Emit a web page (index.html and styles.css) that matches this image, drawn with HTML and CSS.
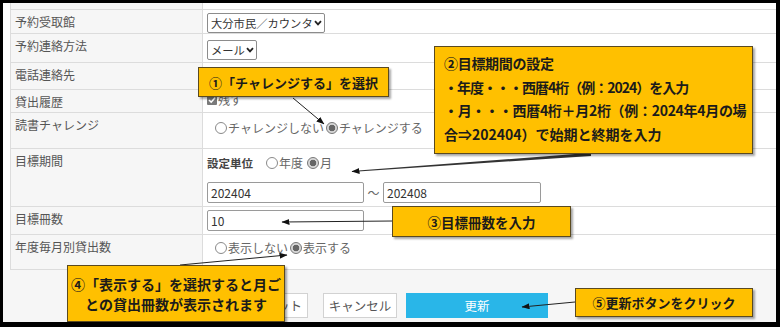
FILE: index.html
```html
<!DOCTYPE html>
<html lang="ja">
<head>
<meta charset="utf-8">
<title>読書チャレンジ設定</title>
<link rel="stylesheet" href="styles.css">
</head>
<body>
<div class="frame">
  <div class="form">
    <div class="row row--stub"><div class="label"></div><div class="value"></div></div>
    <div class="row row--pickup">
      <div class="label">予約受取館</div>
      <div class="value value--pickup">
        <div class="select">大分市民／カウンタ<svg class="chev" width="8" height="6" viewBox="0 0 8 6"><path d="M1 1.2 L4 4.4 L7 1.2" fill="none" stroke="#222" stroke-width="1.8"/></svg></div>
      </div>
    </div>
    <div class="row row--contact">
      <div class="label">予約連絡方法</div>
      <div class="value value--contact">
        <div class="select">メール<svg class="chev" width="8" height="6" viewBox="0 0 8 6"><path d="M1 1.2 L4 4.4 L7 1.2" fill="none" stroke="#222" stroke-width="1.8"/></svg></div>
      </div>
    </div>
    <div class="row row--phone">
      <div class="label">電話連絡先</div>
      <div class="value"></div>
    </div>
    <div class="row row--history">
      <div class="label">貸出履歴</div>
      <div class="value value--history">
        <span class="check"><svg width="10" height="10" viewBox="0 0 10 10"><path d="M2 5 L4.2 7.2 L8.2 2.6" fill="none" stroke="#fff" stroke-width="1.6"/></svg></span><span>残す</span>
      </div>
    </div>
    <div class="row row--challenge">
      <div class="label">読書チャレンジ</div>
      <div class="value value--radios">
        <span class="radio"></span><span>チャレンジしない</span>
        <span class="radio radio--on radio--gap"></span><span>チャレンジする</span>
      </div>
    </div>
    <div class="row row--period">
      <div class="label">目標期間</div>
      <div class="value value--period">
        <div class="unit-line">
          <span class="unit-title">設定単位</span>
          <span class="radio"></span><span>年度</span>
          <span class="radio radio--on radio--gap-wide"></span><span>月</span>
        </div>
        <div class="range-line">
          <div class="input">202404</div>
          <span class="tilde">～</span>
          <div class="input input--end">202408</div>
        </div>
      </div>
    </div>
    <div class="row row--target">
      <div class="label">目標冊数</div>
      <div class="value value--target">
        <div class="input">10</div>
      </div>
    </div>
    <div class="row row--monthly">
      <div class="label">年度毎月別貸出数</div>
      <div class="value value--monthly">
        <span class="radio"></span><span>表示しない</span>
        <span class="radio radio--on radio--gap"></span><span>表示する</span>
      </div>
    </div>
  </div>
  <div class="footer">
    <div class="btn btn--reset">リセット</div>
    <div class="btn btn--cancel">キャンセル</div>
    <div class="btn btn--primary">更新</div>
  </div>

  <svg class="arrows" width="773" height="319" viewBox="0 0 773 319">
    <defs>
      <marker id="ah" markerWidth="8" markerHeight="6" refX="7.5" refY="3" orient="auto" markerUnits="userSpaceOnUse">
        <path d="M0 0 L8 3 L0 6 Z" fill="#111"/>
      </marker>
    </defs>
    <line x1="290" y1="95" x2="321" y2="121" stroke="#222" stroke-width="1" marker-end="url(#ah)"/>
    <path d="M588 149.8 L588 153 L355 168.4 L355 167.6 Z" fill="#333"/>
    <line x1="356" y1="168" x2="349" y2="168.5" stroke="#222" stroke-width="1" marker-end="url(#ah)"/>
    <line x1="389" y1="218" x2="279" y2="219" stroke="#222" stroke-width="1" marker-end="url(#ah)"/>
    <line x1="177" y1="262" x2="284" y2="252" stroke="#222" stroke-width="1" marker-end="url(#ah)"/>
    <line x1="572" y1="299" x2="519" y2="304" stroke="#222" stroke-width="1" marker-end="url(#ah)"/>
  </svg>

  <div class="callout callout--one">①「チャレンジする」を選択</div>
  <div class="callout callout--two">
    <div class="line line--tight">②目標期間の設定</div>
    <div class="line line--tighter">・年度・・・西暦4桁（例：2024）を入力</div>
    <div class="line line--tight">・月・・・西暦4桁＋月2桁（例：2024年4月の場</div>
    <div class="line">合⇒202404）で始期と終期を入力</div>
  </div>
  <div class="callout callout--three">③目標冊数を入力</div>
  <div class="callout callout--four">
    <div>④「表示する」を選択すると月ご</div>
    <div>との貸出冊数が表示されます</div>
  </div>
  <div class="callout callout--five">⑤更新ボタンをクリック</div>
</div>
</body>
</html>
```

FILE: styles.css
```css
html, body {
  margin: 0;
  padding: 0;
}
body {
  background: #000;
  width: 780px;
  height: 327px;
  overflow: hidden;
  font-family: "Noto Sans CJK JP", "Noto Sans", sans-serif;
}
.frame {
  position: relative;
  margin: 3px 4px 0 3px;
  height: 319px;
  background: #fff;
  overflow: hidden;
}
.form {
  margin-left: 7px;
}
.row {
  display: grid;
  grid-template-columns: 193px 1fr;
  border-bottom: 1px solid #dcdcdc;
  box-sizing: border-box;
}
.row--stub { height: 7px; }
.row--pickup { height: 24px; }
.row--contact { height: 29px; }
.row--phone { height: 27px; }
.row--history { height: 23px; }
.row--challenge { height: 36px; }
.row--period { height: 58px; }
.row--target { height: 28px; }
.row--monthly { height: 35px; }

.label {
  background: #f6f6f6;
  border-left: 1px solid #dcdcdc;
  border-right: 1px solid #dcdcdc;
  padding: 4px 0 0 4px;
  font-size: 12px;
  line-height: 16px;
  color: #555;
}
.value {
  padding-left: 4px;
  font-size: 12px;
  line-height: 16px;
  color: #666;
}
.value--pickup { padding-top: 3px; }
.value--contact { padding-top: 6px; }
.value--history {
  padding-top: 2px;
  display: flex;
  align-items: center;
  height: 16px;
}
.value--radios {
  padding: 7px 0 0 12px;
  display: flex;
  align-items: center;
  height: 16px;
}
.value--monthly {
  padding: 5px 0 0 12px;
  display: flex;
  align-items: center;
  height: 16px;
}
.value--period { padding-top: 6px; }
.value--target { padding-top: 3px; }

.select {
  display: inline-flex;
  align-items: center;
  box-sizing: border-box;
  height: 20px;
  border: 1px solid #8c8c8c;
  border-radius: 2px;
  padding: 0 2px 0 3px;
  font-size: 11.3px;
  white-space: nowrap;
  color: #333;
  background: #fff;
}
.chev { flex: none; margin-left: 1px; }

.check {
  display: inline-block;
  width: 10px;
  height: 10px;
  background: #7a7a7a;
  border-radius: 1px;
  margin-right: 1px;
}
.check svg { display: block; }

.radio {
  display: inline-block;
  flex: none;
  width: 10px;
  height: 10px;
  border: 1px solid #8a8a8a;
  border-radius: 50%;
  background: #fff;
  margin-right: 1px;
}
.radio--on {
  background: radial-gradient(circle, #666 0 3px, #d8d8d8 3.6px);
  border-color: #777;
}
.radio--gap { margin-left: 2px; }
.radio--gap-wide { margin-left: 4px; }

.unit-line {
  display: flex;
  align-items: center;
  height: 16px;
}
.unit-title {
  font-weight: 700;
  font-size: 11.5px;
  color: #444;
  margin-right: 13px;
}
.range-line {
  display: flex;
  align-items: center;
  margin-top: 11px;
}
.input {
  box-sizing: border-box;
  width: 157px;
  height: 21px;
  border: 1px solid #9a9a9a;
  border-radius: 2px;
  padding-left: 3px;
  font-size: 12px;
  line-height: 19px;
  color: #333;
  background: #fff;
}
.input--end { width: 158px; }
.tilde {
  width: 19px;
  text-align: center;
  color: #666;
  font-size: 12px;
}

.footer {
  height: 52px;
  box-sizing: border-box;
  background: #f6f6f6;
  padding: 23px 0 0 243px;
  display: flex;
  align-items: flex-start;
}
.btn {
  box-sizing: border-box;
  height: 25px;
  border: 1px solid #d2d2d2;
  background: #fff;
  font-size: 12.5px;
  color: #555;
  display: flex;
  align-items: center;
  justify-content: center;
}
.btn--reset { width: 62px; }
.btn--cancel { width: 74px; margin-left: 15px; }
.btn--primary {
  width: 142px;
  margin-left: 9px;
  background: #29b6e8;
  border-color: #29b6e8;
  color: #fff;
}

.arrows {
  position: absolute;
  left: 0;
  top: 0;
}

.callout {
  position: absolute;
  box-sizing: border-box;
  background: #ffc000;
  border: 1px solid #5a4a20;
  box-shadow: 2px 2px 2px rgba(0, 0, 0, 0.35);
  color: #1b1b1b;
  font-weight: 700;
  font-size: 14px;
  white-space: nowrap;
  display: flex;
  align-items: center;
  justify-content: center;
}
.callout--one {
  left: 195px;
  top: 64px;
  width: 191px;
  height: 30px;
  font-size: 13px;
}
.callout--two {
  left: 431px;
  top: 43px;
  width: 319px;
  height: 108px;
  flex-direction: column;
  align-items: flex-start;
  justify-content: flex-start;
  padding: 5px 0 0 9px;
  line-height: 23.5px;
}
.line--tight { letter-spacing: -0.3px; }
.line--tighter { letter-spacing: -1px; }
.callout--three {
  left: 389px;
  top: 203px;
  width: 179px;
  height: 31px;
  font-size: 13.5px;
}
.callout--four {
  left: 64px;
  top: 262px;
  width: 218px;
  height: 57px;
  flex-direction: column;
  line-height: 20px;
}
.callout--five {
  left: 572px;
  top: 285px;
  width: 178px;
  height: 29px;
  font-size: 13px;
}
```
